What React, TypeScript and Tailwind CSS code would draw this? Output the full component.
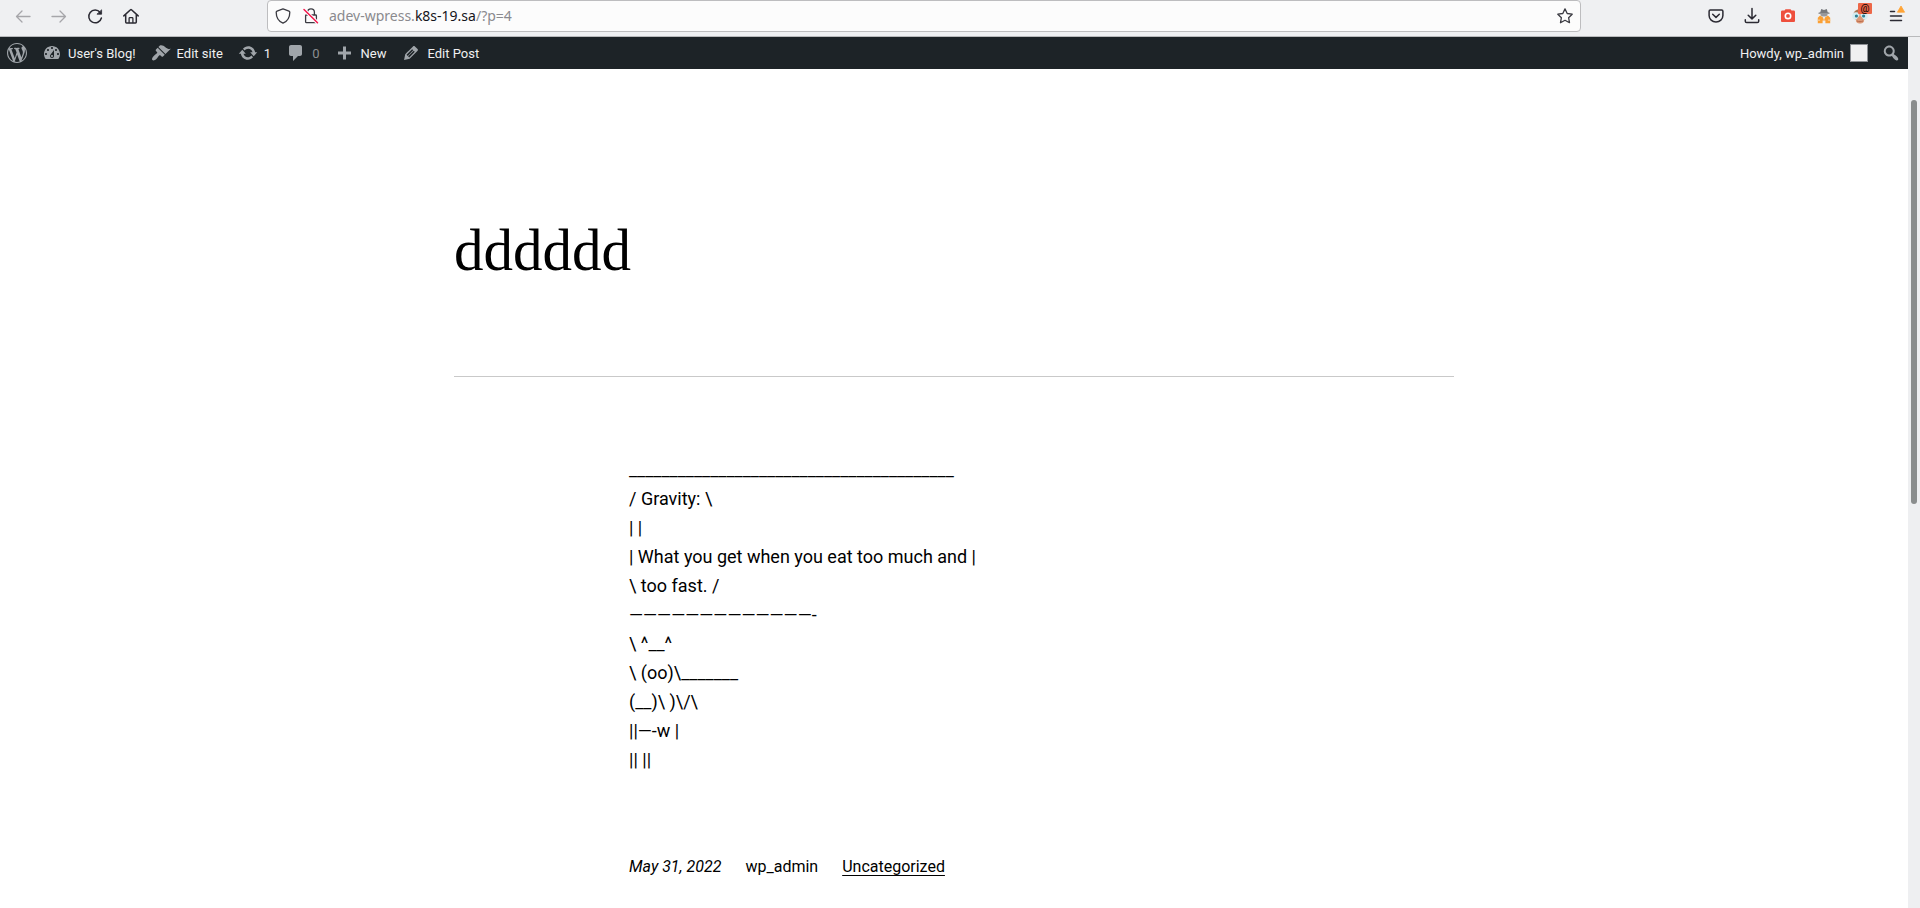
import { useState } from "react";
import type { ReactNode } from "react";

const DASHICONS = {
  wordpress:
    "M20 10c0-5.51-4.49-10-10-10C4.48 0 0 4.49 0 10c0 5.52 4.48 10 10 10 5.51 0 10-4.48 10-10zM7.78 15.37L4.37 6.22c.55-.02 1.17-.08 1.17-.08.5-.06.44-1.13-.06-1.11 0 0-1.45.11-2.37.11-.18 0-.37 0-.58-.01C4.12 2.69 6.87 1.11 10 1.11c2.33 0 4.45.87 6.05 2.34-.68-.11-1.65.39-1.65 1.58 0 .74.45 1.36.9 2.1.35.61.55 1.36.55 2.46 0 1.49-1.4 5-1.4 5l-3.03-8.37c.54-.02.82-.17.82-.17.5-.05.44-1.25-.06-1.22 0 0-1.44.12-2.38.12-.87 0-2.33-.12-2.33-.12-.5-.03-.56 1.2-.06 1.22l.92.08 1.26 3.41zM17.41 10c.24-.64.74-1.87.43-4.25.7 1.29 1.05 2.71 1.05 4.25 0 3.29-1.73 6.24-4.4 7.78.97-2.59 1.94-5.2 2.92-7.78zM6.1 18.09C3.12 16.65 1.11 13.53 1.11 10c0-1.3.23-2.48.72-3.59C3.25 10.3 4.67 14.2 6.1 18.09zm4.03-6.63l2.58 6.98c-.86.29-1.76.45-2.71.45-.79 0-1.57-.11-2.29-.33.81-2.38 1.62-4.74 2.42-7.1z",
  dashboard:
    "M3.76 16h12.48c1.1-1.37 1.76-3.11 1.76-5 0-4.42-3.58-8-8-8s-8 3.58-8 8c0 1.89.66 3.63 1.76 5zM10 4c.55 0 1 .45 1 1s-.45 1-1 1-1-.45-1-1 .45-1 1-1zM6 6c.55 0 1 .45 1 1s-.45 1-1 1-1-.45-1-1 .45-1 1-1zm8 0c.55 0 1 .45 1 1s-.45 1-1 1-1-.45-1-1 .45-1 1-1zm-5.37 5.55L12 7v6c0 1.1-.9 2-2 2s-2-.9-2-2c0-.57.24-1.08.63-1.45zM4 10c.55 0 1 .45 1 1s-.45 1-1 1-1-.45-1-1 .45-1 1-1zm12 0c.55 0 1 .45 1 1s-.45 1-1 1-1-.45-1-1 .45-1 1-1zm-5 3c0-.55-.45-1-1-1s-1 .45-1 1 .45 1 1 1 1-.45 1-1z",
  appearance:
    "M14.48 11.06L7.41 3.99l1.5-1.5c.5-.56 2.3-.47 3.51.32 1.21.8 1.43 1.28 2.91 2.1 1.18.64 2.45 1.26 4.45.85zm-.71.71L6.7 4.7 4.93 6.47c-.39.39-.39 1.02 0 1.41l1.06 1.06c.39.39.39 1.03 0 1.42-.6.6-1.43 1.11-2.21 1.69-.35.26-.7.53-1.01.84C1.43 14.23.4 16.08 1.4 17.07c.99 1 2.84-.03 4.18-1.36.31-.31.58-.66.85-1.02.57-.78 1.08-1.61 1.69-2.21.39-.39 1.02-.39 1.41 0l1.06 1.06c.39.39 1.02.39 1.41 0z",
  update:
    "M10.2 3.28c3.53 0 6.43 2.61 6.92 6h2.08l-3.5 4-3.5-4h2.32c-.45-1.97-2.21-3.45-4.32-3.45-1.45 0-2.73.71-3.54 1.78L4.95 5.66C6.23 4.2 8.11 3.28 10.2 3.28zm-.4 13.44c-3.52 0-6.43-2.61-6.92-6H.8l3.5-4c1.17 1.33 2.33 2.67 3.5 4H5.48c.45 1.97 2.21 3.45 4.32 3.45 1.45 0 2.73-.71 3.54-1.78l1.71 1.95c-1.28 1.46-3.15 2.38-5.25 2.38z",
  comment:
    "M5 2h9c1.1 0 2 .9 2 2v7c0 1.1-.9 2-2 2h-2l-5 5v-5H5c-1.1 0-2-.9-2-2V4c0-1.1.9-2 2-2z",
  plus: "M17 8.5v3h-5v5H9v-5H4v-3h5v-5h3v5h5z",
  edit: "M13.89 3.39l2.71 2.72c.46.46.42 1.24.03 1.64l-8.01 8.02-5.56 1.16 1.16-5.58s7.6-7.63 7.99-8.03c.39-.39 1.22-.39 1.68.07zm-2.73 2.79l-5.59 5.61 1.11 1.11 5.54-5.65zm-2.97 8.23l5.58-5.6-1.07-1.08-5.59 5.6z",
  search:
    "M12.14 4.18c1.87 1.87 2.11 4.75.72 6.89.12.1.22.21.36.31.2.16.47.36.81.59.34.24.56.39.66.47.42.31.73.57.94.78.32.32.6.65.84 1 .25.35.44.69.59 1.04.14.35.21.68.18 1-.02.32-.14.59-.36.81s-.49.34-.81.36c-.31.02-.65-.04-.99-.19-.35-.14-.7-.34-1.04-.59-.35-.24-.68-.52-1-.84-.21-.21-.47-.52-.77-.93-.1-.13-.25-.35-.47-.66-.22-.32-.4-.57-.56-.78-.16-.2-.29-.35-.44-.5-2.07 1.09-4.69.76-6.44-.98-2.14-2.15-2.14-5.64 0-7.78 2.15-2.15 5.63-2.15 7.78 0zm-1.41 6.36c1.36-1.37 1.36-3.58 0-4.95-1.37-1.37-3.59-1.37-4.95 0-1.37 1.37-1.37 3.58 0 4.95 1.36 1.37 3.58 1.37 4.95 0z",
};

function Dashicon({ name }: { name: keyof typeof DASHICONS }) {
  return (
    <svg viewBox="0 0 20 20" className="size-5 shrink-0 fill-[#a0a5aa]" fillRule="evenodd" aria-hidden="true">
      <path d={DASHICONS[name]} />
    </svg>
  );
}

/* 16px outline icon used by the browser toolbar. */
function Glyph({ children }: { children: ReactNode }) {
  return (
    <svg
      viewBox="0 0 16 16"
      className="size-4 overflow-visible"
      fill="none"
      stroke="currentColor"
      strokeWidth="1.3"
      strokeLinecap="round"
      strokeLinejoin="round"
      aria-hidden="true"
    >
      {children}
    </svg>
  );
}

function ToolButton({ label, disabled, children }: { label: string; disabled?: boolean; children: ReactNode }) {
  return (
    <button
      type="button"
      aria-label={label}
      disabled={disabled}
      className="flex h-8 w-9 items-center justify-center text-[#2b2a33] disabled:text-[#a6a6aa]"
    >
      {children}
    </button>
  );
}

function AddressBar() {
  const [url, setUrl] = useState("adev-wpress.k8s-19.sa/?p=4");
  const domain = "k8s-19.sa";
  const at = url.indexOf(domain);
  const before = at < 0 ? url : url.slice(0, at);
  const after = at < 0 ? "" : url.slice(at + domain.length);

  return (
    <div className="flex h-8 flex-1 items-center rounded border border-[#bdbdbf] bg-[#fcfcfc] pr-[5px] text-[#3b3b42]">
      <button type="button" aria-label="Tracking protection" className="flex w-[30px] justify-center">
        <Glyph>
          <path d="M8 .9 14 3.1c.5.2.8.6.8 1.1 0 5.3-2.1 9-6.8 10.9C3.3 13.2 1.2 9.5 1.2 4.2c0-.5.3-.9.8-1.1z" />
        </Glyph>
      </button>
      <button type="button" aria-label="Connection is not secure" className="flex w-[26px] justify-center">
        <Glyph>
          <path d="M4.600 6.800V4.300a3.400 3.400 0 0 1 6.800 0v2.500M3.400 7h9.200c.4 0 .8.300.8.800v5.900c0 .5-.4.900-.9.900h-9c-.5 0-.9-.4-.9-.9V7.800c0-.5.4-.8.8-.8z" />
          <path d="M1 1.500l13.500 13.300" stroke="#fcfcfc" strokeWidth="3.600" strokeLinecap="butt" />
          <path d="M1 1.500l13.500 13.300" stroke="#f5174b" strokeWidth="1.500" />
        </Glyph>
      </button>
      <div className="relative ml-[5px] h-full flex-1 font-['Noto_Sans',sans-serif] text-sm">
        <input
          aria-label="Address"
          spellCheck={false}
          value={url}
          onChange={(e) => setUrl(e.target.value)}
          className="h-full w-full bg-transparent text-transparent caret-black outline-none"
        />
        <div aria-hidden="true" className="pointer-events-none absolute inset-0 flex items-center text-[#8a8a8e]">
          <span>{before}</span>
          {at >= 0 && <span className="text-[#15141a]">{domain}</span>}
          <span>{after}</span>
        </div>
      </div>
      <button type="button" aria-label="Bookmark this page" className="flex w-5 justify-center">
        <Glyph>
          <path d="M8 .9l2.200 4.600 5 .7-3.600 3.500.9 5L8 12.300l-4.500 2.400.9-5L.8 6.200l5-.7z" />
        </Glyph>
      </button>
    </div>
  );
}

function BrowserToolbar() {
  return (
    <div className="flex h-[37px] items-start border-b border-[#b9babc] bg-[#eff0f2]">
      <nav aria-label="Browser navigation" className="flex w-[267px] pl-[5px]">
        <ToolButton label="Back" disabled>
          <Glyph>
            <path d="M15 8.500H1.500M7 3 1.500 8.500 7 14" />
          </Glyph>
        </ToolButton>
        <ToolButton label="Forward" disabled>
          <Glyph>
            <path d="M1 8.500h13.500M9 3l5.500 5.500L9 14" />
          </Glyph>
        </ToolButton>
        <ToolButton label="Reload">
          <Glyph>
            <path d="M13.100 4.300A6.400 6.400 0 1 0 14.400 10" strokeWidth="1.500" />
            <path d="M14.600 2.200v4H10.300z" fill="currentColor" strokeWidth=".8" />
          </Glyph>
        </ToolButton>
        <ToolButton label="Home">
          <Glyph>
            <path d="M.8 7.900 7.500 1.700c.3-.3.700-.3 1 0l6.700 6.200M2.700 6.400v7.700c0 .5.300.8.800.8h9c.5 0 .8-.3.800-.8V6.400" strokeWidth="1.500" />
            <path d="M6.100 14.500v-4c0-.5.300-.8.800-.8h2.200c.5 0 .8.300.8.800v4" />
          </Glyph>
        </ToolButton>
      </nav>
      <AddressBar />
      <div className="flex w-[339px] justify-end pr-1.5">
        <ToolButton label="Save to Pocket">
          <Glyph>
            <path d="M2.300 2h11.400c.7 0 1.200.5 1.200 1.200v4.300a6.900 6.500 0 0 1-13.800 0V3.200C1.100 2.500 1.600 2 2.300 2z" strokeWidth="1.500" />
            <path d="M4.700 6.300 8 9.400l3.300-3.100" strokeWidth="1.500" />
          </Glyph>
        </ToolButton>
        <ToolButton label="Downloads">
          <Glyph>
            <path d="M8 .6v10.100M4.200 7.200 8 10.900l3.800-3.700M1.300 11.800v1.400c0 .8.600 1.400 1.400 1.400h10.600c.8 0 1.400-.6 1.400-1.400v-1.400" strokeWidth="1.500" />
          </Glyph>
        </ToolButton>
        <ToolButton label="Screenshot">
          <svg viewBox="0 0 16 16" className="size-4" aria-hidden="true">
            <path d="M2.300 2.600h2.200l1-1.300h5l1 1.300h2.200c.8 0 1.300.6 1.300 1.300v8.800c0 .8-.5 1.300-1.300 1.300H2.300C1.500 14 1 13.500 1 12.700V3.900c0-.7.5-1.300 1.300-1.300z" fill="#ee4f3d" />
            <circle cx="8" cy="7.900" r="2.700" fill="none" stroke="#fff" strokeWidth="1.600" />
          </svg>
        </ToolButton>
        <ToolButton label="Private agent">
          <svg viewBox="0 0 16 16" className="size-4" aria-hidden="true">
            <path d="M5.200 1 8 2l2.800-1 .9 3.200 1.800.6v.9h-11v-.9l1.800-.6z" fill="#77797c" />
            <path d="M4.500 5.600h7v1.700L9.900 8.600H6.100L4.500 7.300z" fill="#98999c" />
            <path d="M4.100 7.500 8 10l3.900-2.500 2.300 2.300V15.200H9.400V12.400H6.600v2.800H1.800V9.800z" fill="#fba034" />
            <path d="M1.800 11.500h2.300V13H1.800zM11.900 11.500h2.300V13h-2.300z" fill="#f7c386" />
            <path d="M6.600 8.300 8 9.600l1.400-1.300L8 12.400z" fill="#ececec" />
          </svg>
        </ToolButton>
        <ToolButton label="User agent">
          <span className="relative">
            <svg viewBox="0 0 16 16" className="size-4" aria-hidden="true">
              <path d="M1.200 6C2 3 4.500 1.300 8 1.300S14 3 14.800 6L13 11.500 8 14.500 3 11.500z" fill="#c98b64" />
              <path d="M1.800 4.800C3.500 2.200 5.500 1.500 8 1.500l.5 3.500z" fill="#a87450" />
              <circle cx="4" cy="8" r="3.800" fill="#d5edf2" />
              <circle cx="12" cy="8" r="3.800" fill="#d5edf2" />
              <circle cx="4.400" cy="8" r="1.600" fill="#2e8195" />
              <circle cx="11.600" cy="8" r="1.600" fill="#2e8195" />
              <path d="M8 7 12 12c.5 2-1.500 3.600-4 3.600S3.500 14 4 12z" fill="#dc9a78" />
              <path d="M5 13c2 .9 4 .9 6 0" fill="none" stroke="#b8694c" />
            </svg>
            <span className="absolute -top-[5px] left-1.5 flex h-[11px] w-3.5 items-center justify-center rounded-[1px] bg-[#ed6748] font-['Roboto',sans-serif] text-[10px] leading-none text-black">
              @
            </span>
          </span>
        </ToolButton>
        <ToolButton label="Open application menu">
          <svg viewBox="0 0 16 16" className="size-4 overflow-visible" aria-hidden="true">
            <path d="M2.500 3.500h4M2.500 8h11M2.500 12.500h11" stroke="#2b2a33" strokeWidth="1.500" strokeLinecap="round" />
            <path d="M13 -2 16.600 4.200H9.400z" fill="#ffa436" stroke="#ffa436" strokeWidth=".8" strokeLinejoin="round" />
          </svg>
        </ToolButton>
      </div>
    </div>
  );
}

function BarLink({
  icon,
  label,
  children,
}: {
  icon: keyof typeof DASHICONS;
  label?: string;
  children?: ReactNode;
}) {
  return (
    <li>
      <a href="#" aria-label={label} className="flex h-8 items-center gap-1.5 px-[7px]">
        <Dashicon name={icon} />
        {children && <span className="pt-0.5">{children}</span>}
      </a>
    </li>
  );
}

function AdminBar() {
  return (
    <nav
      aria-label="Toolbar"
      className="flex h-8 shrink-0 justify-between bg-[#1d2327] text-[13px] text-[#f0f0f1]"
    >
      <ul className="flex gap-px">
        <BarLink icon="wordpress" label="About WordPress" />
        <BarLink icon="dashboard">User's Blog!</BarLink>
        <BarLink icon="appearance">Edit site</BarLink>
        <BarLink icon="update">1</BarLink>
        <BarLink icon="comment">
          <span className="text-[#8b8e91]">0</span>
        </BarLink>
        <BarLink icon="plus">New</BarLink>
        <BarLink icon="edit">Edit Post</BarLink>
      </ul>
      <ul className="flex">
        <li>
          <a href="#" className="flex h-8 items-center gap-1.5 px-1.5">
            <span className="pt-0.5">Howdy, wp_admin</span>
            <span className="size-[18px] border border-[#8c8f94] bg-[#f0f0f1]" />
          </a>
        </li>
        <BarLink icon="search" label="Search" />
      </ul>
    </nav>
  );
}

const COW = [
  "________________________________________",
  "/ Gravity: \\",
  "| |",
  "| What you get when you eat too much and |",
  "\\ too fast. /",
  "—————————————-",
  "\\ ^__^",
  "\\ (oo)\\_______",
  "(__)\\ )\\/\\",
  "||—-w |",
  "|| ||",
];

function Post() {
  return (
    <article className="px-8 pt-[143px] text-black">
      <header className="mx-auto max-w-[1000px] border-b border-[#c9c9c9] pb-[88px]">
        <h1 className="font-['Source_Serif_Pro','Liberation_Serif',serif] text-[59px] font-light leading-[76px]">
          dddddd
        </h1>
      </header>
      <div className="mx-auto max-w-[650px] pt-[78px]">
        <p className="text-lg leading-[29px]">
          {COW.map((line, i) => (
            <span key={i} className="block">
              {line}
            </span>
          ))}
        </p>
        <footer className="flex gap-6 pt-[81px] text-base leading-6">
          <time dateTime="2022-05-31" className="italic">
            May 31, 2022
          </time>
          <span>wp_admin</span>
          <a href="#" className="underline underline-offset-[3px] [text-decoration-skip-ink:none]">
            Uncategorized
          </a>
        </footer>
      </div>
    </article>
  );
}

export default function App() {
  return (
    <div className="flex h-screen flex-col overflow-hidden bg-white font-['Roboto',sans-serif]">
      <BrowserToolbar />
      <div className="flex min-h-0 flex-1">
        <main className="flex min-w-0 flex-1 flex-col overflow-hidden">
          <AdminBar />
          <Post />
        </main>
        <div className="w-3 bg-[#eeeff1] px-[3px] pt-[63px]" aria-hidden="true">
          <div className="h-[404px] rounded-full bg-[#8a8d8d]" />
        </div>
      </div>
    </div>
  );
}
